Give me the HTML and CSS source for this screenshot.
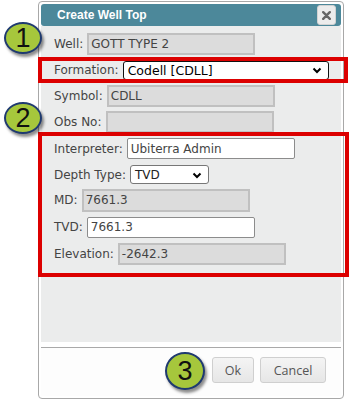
FILE: index.html
```html
<!DOCTYPE html>
<html>
<head>
<meta charset="utf-8">
<link rel="stylesheet" href="styles.css">
</head>
<body>
<div class="dialog">
  <div class="titlebar">
    <span class="title">Create Well Top</span>
    <span class="close">
      <svg width="9" height="9" viewBox="0 0 9 9"><path d="M1.2 1.2 L7.8 7.8 M7.8 1.2 L1.2 7.8" stroke="#666" stroke-width="2.4" stroke-linecap="round"/></svg>
    </span>
  </div>
  <div class="content">
    <div class="row h26"><span class="lbl">Well:</span><span class="field ro">GOTT TYPE 2</span></div>
    <div class="row h26"><span class="lbl">Formation:</span><span class="select sel-formation">Codell [CDLL]<svg class="chev" width="10" height="7" viewBox="0 0 10 7"><path d="M1.5 1.5 L5 5 L8.5 1.5" fill="none" stroke="#000" stroke-width="2"/></svg></span></div>
    <div class="row h25"><span class="lbl">Symbol:</span><span class="field ro">CDLL</span></div>
    <div class="row h27"><span class="lbl">Obs No:</span><span class="field ro"></span></div>
    <div class="row h27"><span class="lbl">Interpreter:</span><span class="field rw">Ubiterra Admin</span></div>
    <div class="row h25"><span class="lbl">Depth Type:</span><span class="select sel-depth">TVD<svg class="chev" width="10" height="7" viewBox="0 0 10 7"><path d="M1.5 1.5 L5 5 L8.5 1.5" fill="none" stroke="#000" stroke-width="2"/></svg></span></div>
    <div class="row h26"><span class="lbl">MD:</span><span class="field ro tall">7661.3</span></div>
    <div class="row h28"><span class="lbl">TVD:</span><span class="field rw">7661.3</span></div>
    <div class="row h26"><span class="lbl">Elevation:</span><span class="field ro">-2642.3</span></div>
  </div>
  <div class="buttonpane">
    <span class="btn btn-ok">Ok</span>
    <span class="btn btn-cancel">Cancel</span>
  </div>
</div>

<div class="annot box1"></div>
<div class="annot box2"></div>
<div class="badge b1">1</div>
<div class="badge b2">2</div>
<div class="badge b3">3</div>
</body>
</html>
```
FILE: styles.css
```css
html, body {
  margin: 0;
  padding: 0;
}
body {
  position: relative;
  width: 349px;
  height: 400px;
  overflow: hidden;
  background: #fff;
  font-family: "DejaVu Sans", Verdana, sans-serif;
  font-size: 12px;
  color: #444;
}
.dialog {
  box-sizing: border-box;
  margin: 1px 0 0 38px;
  width: 306px;
  height: 398px;
  border: 1px solid #a8a8a8;
  border-radius: 4px;
  padding: 2px;
  display: flex;
  flex-direction: column;
  background: #fff;
}
.titlebar {
  height: 22px;
  flex: none;
  background: #4c889a;
  border-radius: 3px;
  display: flex;
  align-items: center;
  justify-content: space-between;
  padding: 0 5px 0 16px;
  color: #fff;
}
.title {
  font-family: "Liberation Sans", Arial, sans-serif;
  font-weight: bold;
  font-size: 12px;
}
.close {
  box-sizing: border-box;
  width: 19px;
  height: 20px;
  background: #ececec;
  border: 1px solid #d2d2d2;
  border-radius: 3px;
  display: flex;
  align-items: center;
  justify-content: center;
}
.content {
  flex: none;
  height: 316px;
  box-sizing: border-box;
  background: #ebecec;
  padding: 5px 0 0 13px;
}
.row {
  display: flex;
  align-items: center;
  gap: 4px;
}
.h25 { height: 25px; }
.h26 { height: 26px; }
.h27 { height: 27px; }
.h28 { height: 28px; }
.lbl {
  color: #444;
  white-space: nowrap;
}
.field {
  box-sizing: border-box;
  width: 168px;
  height: 22px;
  display: flex;
  align-items: center;
  color: #444;
  white-space: nowrap;
}
.field.ro {
  background: #dcdcdc;
  border: 2px solid #c0c0c0;
  padding: 0 2px;
}
.field.tall {
  height: 23px;
}
.field.rw {
  background: #fff;
  border: 1px solid #8c8c8c;
  border-radius: 2px;
  padding: 0 3px;
  height: 21px;
}
.select {
  position: relative;
  box-sizing: border-box;
  display: flex;
  align-items: center;
  background: #fff;
  color: #000;
  white-space: nowrap;
}
.sel-formation {
  width: 206px;
  height: 19px;
  border: 1px solid #111;
  border-radius: 3px;
  padding: 0 4px;
  font-size: 12.5px;
}
.sel-depth {
  width: 79px;
  height: 19px;
  border: 1px solid #777;
  border-radius: 3px;
  padding: 0 4px;
  color: #222;
}
.chev {
  position: absolute;
  right: 6px;
  top: 50%;
  margin-top: -3px;
}
.buttonpane {
  flex: 1;
  margin-top: 5px;
  border-top: 1px solid #a9a9a9;
  display: flex;
  justify-content: flex-end;
  align-items: flex-start;
  gap: 6px;
  padding: 9px 15px 0 0;
  background: #fdfdfd;
}
.btn {
  box-sizing: border-box;
  height: 26px;
  border: 1px solid #cfcfcf;
  border-radius: 3px;
  background: linear-gradient(#f4f4f4, #e6e6e6);
  color: #555;
  font-family: "Open Sans", "Liberation Sans", sans-serif;
  font-size: 12.5px;
  display: flex;
  align-items: center;
  justify-content: center;
}
.btn-ok { width: 42px; }
.btn-cancel { width: 66px; }

.annot {
  position: absolute;
  box-sizing: border-box;
  border: 4px solid #dc0000;
}
.box1 {
  left: 38px;
  top: 57px;
  width: 310px;
  height: 26px;
}
.box2 {
  left: 38px;
  top: 132px;
  width: 311px;
  height: 145px;
}
.badge {
  position: absolute;
  box-sizing: border-box;
  border: 2px solid #1f3a70;
  border-radius: 50%;
  background: #a6c73c;
  box-shadow: 2px 3px 3px rgba(0, 0, 0, 0.45);
  color: #111;
  font-family: "Liberation Sans", Arial, sans-serif;
  font-size: 27px;
  display: flex;
  align-items: center;
  justify-content: center;
}
.b1 {
  left: 4px;
  top: 22px;
  width: 38px;
  height: 32px;
}
.b2 {
  left: 4px;
  top: 102px;
  width: 38px;
  height: 32px;
}
.b3 {
  left: 165px;
  top: 352px;
  width: 40px;
  height: 38px;
}
```
